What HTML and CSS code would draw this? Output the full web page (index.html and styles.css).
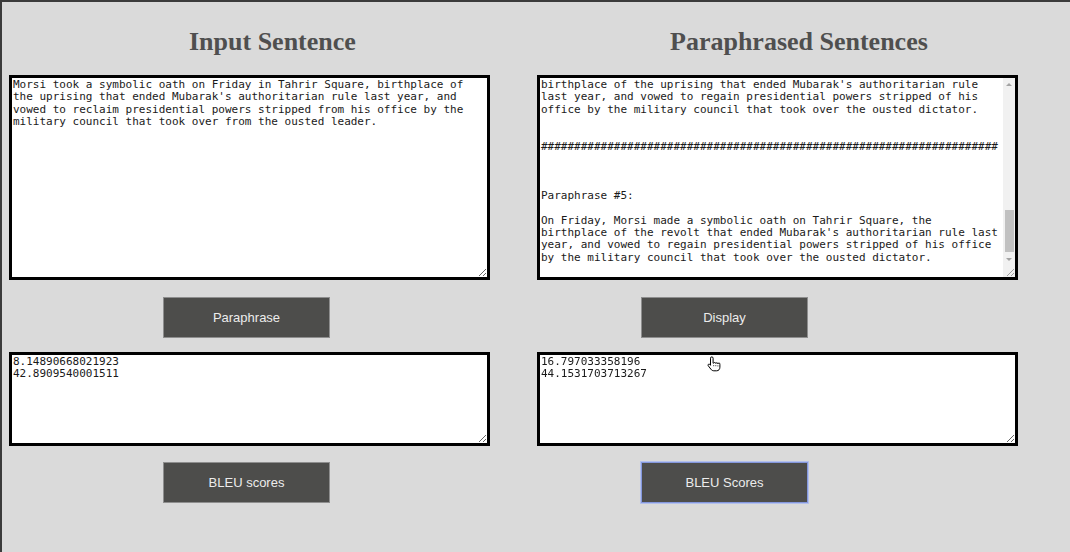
FILE: index.html
```html
<!DOCTYPE html>
<html lang="en">
<head>
<meta charset="utf-8">
<title>Paraphrase</title>
<link rel="stylesheet" href="styles.css">
</head>
<body>
<div class="page">
  <section class="col col-left">
    <h1 class="title">Input Sentence</h1>
    <textarea class="box box-main">Morsi took a symbolic oath on Friday in Tahrir Square, birthplace of the uprising that ended Mubarak's authoritarian rule last year, and vowed to reclaim presidential powers stripped from his office by the military council that took over from the ousted leader.</textarea>
    <button class="btn" type="button">Paraphrase</button>
    <div class="score-wrap">
      <textarea class="box box-score">8.14890668021923
42.8909540001511</textarea>
    </div>
    <button class="btn btn-last" type="button">BLEU scores</button>
  </section>
  <section class="col col-right">
    <h1 class="title">Paraphrased Sentences</h1>
    <div class="main-wrap">
      <textarea class="box box-main para-out" id="paraOut">Input Sentence:

Morsi took a symbolic oath on Friday in Tahrir Square, birthplace of the uprising that ended Mubarak's authoritarian rule last year, and vowed to reclaim presidential powers stripped from his office by the military council that took over from the ousted leader.

Paraphrase #1:

On Friday, Morsi took a symbolic oath in Tahrir Square, the birthplace of the uprising that ended Mubarak's authoritarian rule last year, and vowed to reclaim presidential powers stripped from his office by the military council that took over from the ousted leader.


#####################################################################



Paraphrase #2:

Morsi took a symbolic oath on Friday in Tahrir Square, the birthplace of the revolt that ended Mubarak's authoritarian rule last year, and vowed to regain presidential powers stripped of his office by the military council that took over from the ousted leader.


#####################################################################



Paraphrase #3:

Morsi made a symbolic oath on Friday in Tahrir Square, the birthplace of the uprising that ended Mubarak's authoritarian rule last year, and vowed to regain presidential powers stripped from his office by the military council that took over the ousted leader.


#####################################################################



Paraphrase #4:

On Friday, Morsi took a symbolic oath in Tahrir Square, the birthplace of the uprising that ended Mubarak's authoritarian rule last year, and vowed to regain presidential powers stripped of his office by the military council that took over the ousted dictator.


#####################################################################



Paraphrase #5:

On Friday, Morsi made a symbolic oath on Tahrir Square, the birthplace of the revolt that ended Mubarak's authoritarian rule last year, and vowed to regain presidential powers stripped of his office by the military council that took over the ousted dictator.

</textarea>
      <div class="vscroll" aria-hidden="true">
        <div class="sb-btn"><span class="tri tri-up"></span></div>
        <div class="sb-track"><div class="sb-thumb"></div></div>
        <div class="sb-btn"><span class="tri tri-down"></span></div>
        <div class="sb-corner">
          <svg width="12" height="12" viewBox="0 0 12 12"><path d="M11 4L4 11M11 8L8 11" stroke="#a0a0a0" stroke-width="1"/></svg>
        </div>
      </div>
    </div>
    <button class="btn" type="button">Display</button>
    <div class="score-wrap">
      <textarea class="box box-score">16.797033358196
44.1531703713267</textarea>
      <svg class="cursor" width="15" height="16" viewBox="0 0 15 16" aria-hidden="true">
        <path d="M4.5 2.2a1.3 1.3 0 0 1 2.6 0V7.2h0.6a1.1 1.1 0 0 1 2.1 0.2 1.1 1.1 0 0 1 2.1 0.4 1 1 0 0 1 2 0.5V11.2c0 2.1-1.3 3.6-3.3 3.6H7.8c-1.3 0-2.2-0.6-2.9-1.6L2.2 9.7a1 1 0 0 1 1.6-1.2L4.5 9.3Z" fill="#fff" stroke="#000" stroke-width="1" stroke-linejoin="round"/>
        <path d="M7.7 9.2v2M9.8 9.2v2M11.9 9.4v1.8" stroke="#000" stroke-width="0.8" stroke-dasharray="1 1"/>
      </svg>
    </div>
    <button class="btn btn-last btn-focus" type="button">BLEU Scores</button>
  </section>
</div>
<script src="script.js"></script>
</body>
</html>
```
FILE: styles.css
```css
html, body {
  margin: 0;
  padding: 0;
}

body {
  background: #dadada;
  font-family: "Liberation Sans", Arial, sans-serif;
}

.page {
  box-sizing: border-box;
  height: 552px;
  border-top: 2px solid #3b3b3b;
  border-left: 2px solid #3b3b3b;
  background: #dadada;
  display: grid;
  grid-template-columns: 481px 481px;
  column-gap: 47px;
  padding-left: 7px;
  align-items: start;
}

.col {
  display: flex;
  flex-direction: column;
  align-items: flex-start;
}

.title {
  margin: 25px 0 18px;
  font: bold 26px/30px "Liberation Serif", "Times New Roman", serif;
  color: #4f4f4f;
  white-space: nowrap;
}

.col-left .title {
  margin-left: 180px;
}

.col-right .title {
  margin-left: 133px;
}

.box {
  display: block;
  box-sizing: border-box;
  width: 481px;
  margin: 0;
  padding: 1px;
  border: 3px solid #000;
  background: #fff;
  color: #1a1a1a;
  font: 11px/12.33px "DejaVu Sans Mono", monospace;
  outline: none;
}

.box-main {
  height: 205px;
}

.para-out {
  padding-right: 13px;
}

.main-wrap {
  position: relative;
}

.vscroll {
  position: absolute;
  top: 3px;
  right: 3px;
  width: 12px;
  height: 199px;
  display: flex;
  flex-direction: column;
  background: #f1f1f1;
}

.sb-btn {
  height: 12px;
  display: flex;
  align-items: center;
  justify-content: center;
}

.tri {
  width: 0;
  height: 0;
  border-left: 3px solid transparent;
  border-right: 3px solid transparent;
}

.tri-up {
  border-bottom: 3px solid #a3a3a3;
}

.tri-down {
  border-top: 3px solid #a3a3a3;
}

.sb-track {
  flex: 1;
  display: flex;
  flex-direction: column;
  align-items: center;
}

.sb-thumb {
  width: 9px;
  height: 42px;
  margin-top: 120px;
  background: #c1c1c1;
}

.sb-corner {
  height: 12px;
  background: #f1f1f1;
}

.sb-corner svg {
  display: block;
}

.box-score {
  height: 94px;
}

.score-wrap {
  position: relative;
  margin-top: 14px;
}

.cursor {
  position: absolute;
  left: 169px;
  top: 4px;
}

.btn {
  appearance: none;
  -webkit-appearance: none;
  box-sizing: border-box;
  width: 167px;
  height: 41px;
  margin-top: 17px;
  padding: 0;
  background: #4d4d4b;
  color: #ececec;
  border: 1px solid #8e8e8e;
  border-radius: 0;
  font: 13px "Liberation Sans", Arial, sans-serif;
}

.btn-last {
  margin-top: 16px;
}

.col-left .btn {
  margin-left: 154px;
}

.col-right .btn {
  margin-left: 104px;
}

.btn-focus {
  border-color: #8497dc;
  box-shadow: 0 0 0 1px #b3c0ec;
}
```
FILE: script.js
```js
(function () {
  var ta = document.getElementById('paraOut');
  var lh = parseFloat(getComputedStyle(ta).lineHeight) || 12.33;
  ta.scrollTop = 46 * lh;
})();
```
